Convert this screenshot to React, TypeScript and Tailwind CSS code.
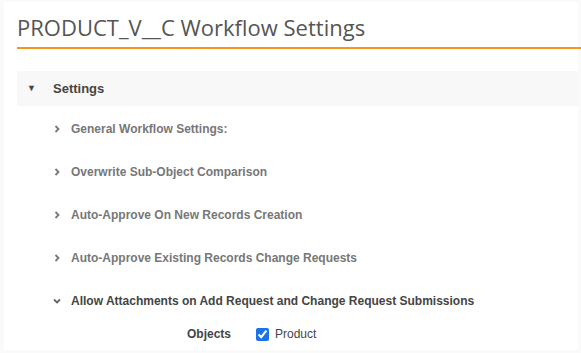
import React from "react";

const Chevron = ({ down }: { down?: boolean }) => (
  <svg width="10" height="10" viewBox="0 0 10 10" className="shrink-0">
    {down ? (
      <path d="M2 3.5 L5 6.5 L8 3.5" fill="none" stroke="#666" strokeWidth="1.8" />
    ) : (
      <path d="M3.5 2 L6.5 5 L3.5 8" fill="none" stroke="#777" strokeWidth="1.8" />
    )}
  </svg>
);

const items = [
  "General Workflow Settings:",
  "Overwrite Sub-Object Comparison",
  "Auto-Approve On New Records Creation",
  "Auto-Approve Existing Records Change Requests",
];

export default function App() {
  return (
    <div className="w-[581px] h-[353px] bg-[#fafafa] pt-[2px] pl-[4px] overflow-hidden">
      <div className="w-[574px] h-[348px] bg-white pl-[13px]" style={{ fontFamily: "'Liberation Sans', Arial, sans-serif" }}>
        <div className="h-[45px] pt-[10px] text-[22px] leading-[30px] text-[#555]" style={{ fontFamily: "'Open Sans', sans-serif" }}>
          PRODUCT_V__C Workflow Settings
        </div>
        <div className="h-[2px] bg-[#f7941d] mr-[-4px]" />
        <div className="h-[22px]" />
        <div className="h-[35px] bg-[#f8f8f8] flex items-center">
          <span className="ml-[10px] text-[9px] text-[#444] w-[26px]">▼</span>
          <span className="text-[13px] font-bold text-[#444]">Settings</span>
        </div>
        <div className="pl-[35px] pt-[1px]">
          {items.map((t) => (
            <div key={t} className="h-[43px] flex items-center gap-[9px]">
              <Chevron />
              <span className="text-[12px] font-bold text-[#777]">{t}</span>
            </div>
          ))}
          <div className="h-[43px] flex items-center gap-[9px]">
            <Chevron down />
            <span className="text-[12px] font-bold text-[#444]">
              Allow Attachments on Add Request and Change Request Submissions
            </span>
          </div>
          <div className="flex items-center ml-[135px] mt-[2px] h-[20px]">
            <span className="text-[12px] font-bold text-[#444] w-[69px]">Objects</span>
            <input type="checkbox" defaultChecked className="w-[13px] h-[13px] accent-[#1a73e8] m-0" />
            <span className="ml-[6px] text-[12px] text-[#444]">Product</span>
          </div>
        </div>
      </div>
    </div>
  );
}
